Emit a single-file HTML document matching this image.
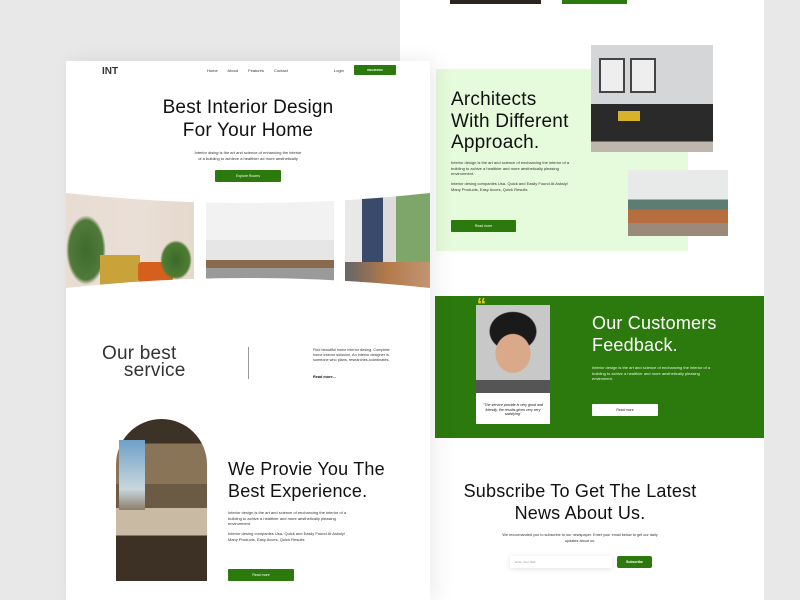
<!DOCTYPE html>
<html><head><meta charset="utf-8"><style>
*{margin:0;padding:0;box-sizing:border-box}
body{width:800px;height:600px;overflow:hidden;background:#e8e8e8;font-family:"Liberation Sans",sans-serif;position:relative;color:#111}
.a{position:absolute}
.btn{position:absolute;background:#2c7a0e;color:#fff;font-size:3.5px;text-align:center;border-radius:1px;display:flex;align-items:center;justify-content:center}
.t{font-size:4px;line-height:5.5px;color:#333}
h1,h2{font-weight:normal;position:absolute;letter-spacing:0.2px}
</style></head><body>
<!-- right panel -->
<div class="a" style="left:400px;top:0;width:364px;height:600px;background:#fff"></div>
<div class="a" style="left:450px;top:0;width:91px;height:4px;background:#2a2520"></div>
<div class="a" style="left:562px;top:0;width:65px;height:4px;background:#2c7a0e"></div>
<div class="a" style="left:436px;top:69px;width:252px;height:182px;background:#e6fadc"></div>
<div class="a" style="left:591px;top:45px;width:122px;height:107px;background:linear-gradient(#d4d6d8 0 55%,#2a2a2a 55% 90%,#bfb6ad 90%)"></div>
<div class="a" style="left:599px;top:58px;width:26px;height:35px;border:2px solid #444;background:#eee"></div>
<div class="a" style="left:630px;top:58px;width:26px;height:35px;border:2px solid #444;background:#eee"></div>
<div class="a" style="left:618px;top:111px;width:22px;height:10px;background:#d8b22a"></div>
<div class="a" style="left:628px;top:170px;width:100px;height:66px;background:linear-gradient(#e8eaea 0 45%,#5d7c72 45% 60%,#b76e3f 60% 80%,#9b8a7a 80%)"></div>
<h2 style="left:451px;top:89px;font-size:19px;line-height:21.5px;font-weight:500">Architects<br>With Different<br>Approach.</h2>
<div class="a t" style="left:451px;top:160px;width:120px">Interior design is the art and science of enchancing the interior of a building to achive a healthier and more aesthetically pleasing environment.</div>
<div class="a t" style="left:451px;top:181px;width:120px">Interior desing companies Usa- Quick and Easily Found At Asksly! Many Products, Easy Acces, Quick Results</div>
<div class="btn" style="left:451px;top:220px;width:65px;height:12px">Read more</div>
<div class="a" style="left:435px;top:296px;width:329px;height:142px;background:#2c7a0e"></div>
<div class="a" style="left:476px;top:305px;width:74px;height:119px;background:#fff"></div>
<div class="a" style="left:476px;top:305px;width:74px;height:88px;background:radial-gradient(ellipse 18px 20px at 50% 55%,#d9a98a 0 95%,transparent 100%),radial-gradient(ellipse 24px 20px at 50% 30%,#1a1a1a 0 95%,transparent 100%),linear-gradient(#c8c8c8 0 85%,#555 85%)"></div>
<div class="a" style="left:477px;top:296px;color:#f2d000;font-size:18px;font-weight:bold;line-height:18px">“</div>
<div class="a" style="left:479px;top:403px;width:68px;font-size:3.6px;line-height:4.5px;text-align:center;font-style:italic">"The service provide is very good and friendly, the results given very very satisfying"</div>
<h2 style="left:592px;top:312px;font-size:18px;line-height:22px;color:#fff">Our Customers<br>Feedback.</h2>
<div class="a t" style="left:592px;top:365px;width:120px;color:#e8f5e0">Interior design is the art and science of enchancing the interior of a building to achive a healthier and more aesthetically pleasing enviroment.</div>
<div class="btn" style="left:592px;top:404px;width:66px;height:12px;background:#fff;color:#222">Read more</div>
<h2 style="left:430px;top:480px;width:300px;text-align:center;font-size:18px;line-height:22px">Subscribe To Get The Latest<br>News About Us.</h2>
<div class="a t" style="left:500px;top:533px;width:160px;text-align:center;font-size:3.8px;line-height:5.5px">We reccomanded you to subscribe to our newspaper. Enter your email below to get our daily updates about us.</div>
<div class="a" style="left:510px;top:556px;width:102px;height:12px;background:#fff;box-shadow:0 1px 6px rgba(0,0,0,.12);font-size:3px;color:#999;padding:4px 5px">Enter Your Mail</div>
<div class="btn" style="left:617px;top:556px;width:35px;height:12px;font-weight:bold;border-radius:2px">Subscribe</div>
<!-- left panel -->
<div class="a" style="left:66px;top:61px;width:364px;height:539px;background:#fff;box-shadow:6px 0 20px rgba(0,0,0,.08)"></div>
<div class="a" style="left:66px;top:190px;width:128px;height:100px;background:linear-gradient(90deg,#e8dcd3,#eadfd6 60%,#e5d8cc);"></div>
<div class="a" style="left:66px;top:215px;width:40px;height:70px;background:radial-gradient(#3e6b2f,#517a3a 60%,transparent 70%)"></div>
<div class="a" style="left:100px;top:255px;width:40px;height:30px;background:#c9a23a"></div>
<div class="a" style="left:138px;top:262px;width:35px;height:20px;background:#d5601e;border-radius:4px"></div>
<div class="a" style="left:160px;top:240px;width:32px;height:40px;background:radial-gradient(#3a6a28,#4f7d35 60%,transparent 70%)"></div>
<div class="a" style="left:206px;top:190px;width:128px;height:100px;background:linear-gradient(#f2f2f2 0 50%,#e6e6e6 50% 70%,#8a6a4e 70% 78%,#9a9a9a 78%)"></div>
<div class="a" style="left:345px;top:190px;width:85px;height:100px;background:linear-gradient(90deg,#e8e8e8 0 20%,#3a4a6a 20% 45%,#dcdcdc 45% 60%,#7ea56a 60%)"></div>
<div class="a" style="left:345px;top:262px;width:85px;height:28px;background:linear-gradient(90deg,#666,#b47a4a,#c29574)"></div>
<svg class="a" style="left:0;top:0" width="800" height="600"><path d="M66,185 L66,193 Q248,213 430,193 L430,185 Z" fill="#fff"/><path d="M66,300 L66,288 Q248,268 430,288 L430,300 Z" fill="#fff"/></svg>
<div class="a" style="left:102px;top:66px;font-size:10px;font-weight:bold;color:#333">INT</div>
<div class="a" style="left:207px;top:68px;font-size:4px;color:#333;word-spacing:9px">Home About Features Contact</div>
<div class="a" style="left:334px;top:68px;font-size:4px;color:#333">Login</div>
<div class="btn" style="left:354px;top:65px;width:42px;height:10px;font-weight:bold;font-size:3px">REGISTER</div>
<h1 style="left:66px;top:96px;width:364px;text-align:center;font-size:19px;line-height:23px">Best Interior Design<br>For Your Home</h1>
<div class="a t" style="left:66px;top:150px;width:364px;text-align:center;line-height:6px">Interior dising is the art and science of enhancing the interior<br>of a building to achieve a healthier ad more aesthetically</div>
<div class="btn" style="left:215px;top:170px;width:66px;height:12px">Explore Rooms</div>
<h1 style="left:102px;top:345px;font-size:19px;line-height:17px;color:#333">Our best<br>&nbsp;&nbsp;&nbsp;&nbsp;service</h1>
<div class="a" style="left:248px;top:347px;width:1px;height:32px;background:#999"></div>
<div class="a t" style="left:313px;top:348px;width:84px;font-size:3.8px;line-height:5px">Find beautiful home interior desing. Complete home interior solusion. An interior designer is someone who plans, researches,coordinates.</div>
<div class="a" style="left:313px;top:375px;font-size:3.8px;font-weight:bold">Read more...</div>
<div class="a" style="left:116px;top:419px;width:91px;height:162px;border-radius:46px 46px 0 0;background:linear-gradient(#3c3226 0 15%,#8a7458 15% 40%,#6b5a44 40% 55%,#c9bba3 55% 72%,#3d3024 72%)"></div>
<div class="a" style="left:119px;top:440px;width:26px;height:70px;background:linear-gradient(#6ea0c8,#c9d7dc 70%,#8a7d6a)"></div>
<h2 style="left:228px;top:458px;font-size:18px;line-height:22px">We Provie You The<br>Best Experience.</h2>
<div class="a t" style="left:228px;top:510px;width:120px">Interior design is the art and science of enchancing the interior of a building to achive a healthier and more aesthetically pleasing environment.</div>
<div class="a t" style="left:228px;top:531px;width:120px">Interior desing companies Usa- Quick and Easily Found At Asksly! Many Products, Easy Acces, Quick Results</div>
<div class="btn" style="left:228px;top:569px;width:66px;height:12px">Read more</div>
</body></html>
